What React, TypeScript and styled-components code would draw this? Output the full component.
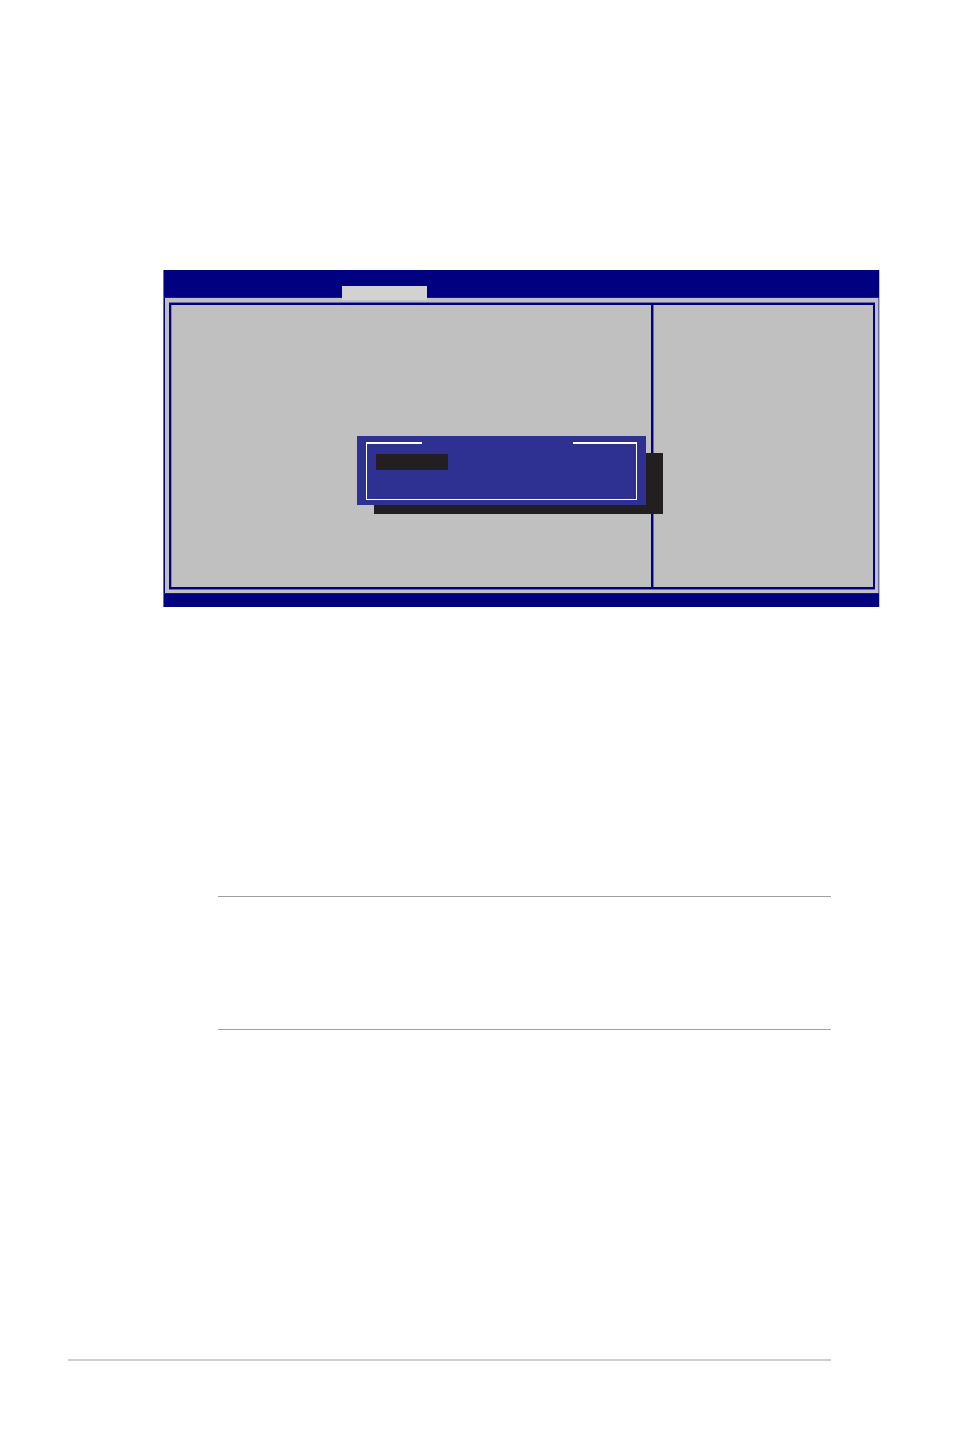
import React from "react";
import styled, { createGlobalStyle } from "styled-components";

const color = {
  navy: "#000080",
  navyEdge: "#6a68ae",
  panel: "#c0c0c0",
  tab: "#d2d2d2",
  popup: "#2e3192",
  black: "#231f20",
  rule: "#a0a0a0",
  footer: "#cfcfcf",
};

const GlobalStyle = createGlobalStyle`
  *, *::before, *::after { box-sizing: border-box; }
  body {
    margin: 0;
    background: #ffffff;
    font-family: "Liberation Sans", Arial, sans-serif;
  }
`;

const Page = styled.main`
  display: flex;
  flex-direction: column;
  min-height: 100vh;
  padding: 270px 123px 76px 68px;
`;

const Screen = styled.section`
  display: flex;
  flex-direction: column;
  margin: 0 -49px 0 95px;
  border-left: 1px solid ${color.navyEdge};
  border-right: 1px solid #bdbbdd;
`;

const MenuBar = styled.header`
  display: flex;
  align-items: flex-end;
  height: 28px;
  padding-left: 178px;
  background: ${color.navy};
  border-bottom: 1px solid #1a1887;
`;

const ActiveTab = styled.div`
  position: relative;
  width: 85px;
  height: 14px;
  margin-bottom: -3px;
  background: ${color.tab};
`;

const Body = styled.div`
  padding: 4px 3px 3px 4px;
  background: ${color.panel};
  border-left: 1px solid ${color.navy};
  border-right: 1px solid ${color.navyEdge};
`;

const FrameEdge = styled.div`
  border-top: 1px solid ${color.navyEdge};
  border-bottom: 1px solid ${color.navyEdge};
`;

const Frame = styled.div`
  position: relative;
  display: flex;
  height: 286px;
  border: 2px solid ${color.navy};
`;

const Settings = styled.div`
  flex: 479 1 0;
  border-left: 1px solid #8887b0;
`;

const Help = styled.aside`
  flex: 220 1 0;
  border-left: 2px solid ${color.navy};
  box-shadow: inset 1px 0 0 ${color.navyEdge};
`;

const StatusBar = styled.footer`
  height: 14px;
  background: ${color.navy};
  border-top: 1px solid #1a1887;
`;

const Popup = styled.div`
  position: absolute;
  top: 131px;
  left: 186px;
  width: 289px;
  height: 69px;
  padding: 6px 9px 5px;
  background: ${color.popup};
`;

const PopupShadow = styled.div`
  position: absolute;
  top: 148px;
  left: 203px;
  width: 289px;
  height: 61px;
  background: ${color.black};
`;

const PopupTitle = styled.div`
  display: flex;
  justify-content: space-between;
  height: 2px;
`;

const TitleRule = styled.span<{ $width: number }>`
  width: ${({ $width }) => $width}px;
  background: #ffffff;
`;

const PopupList = styled.div`
  height: 56px;
  padding: 10px 9px;
  border: 1px solid #ffffff;
  border-top: 0;
`;

const SelectedOption = styled.div`
  width: 72px;
  height: 16px;
  background: ${color.black};
`;

const Note = styled.section`
  height: 134px;
  margin: 289px 0 0 150px;
  border-top: 1px solid ${color.rule};
  border-bottom: 1px solid ${color.rule};
`;

const FooterRule = styled.hr`
  width: 100%;
  height: 2px;
  margin: auto 0 0;
  border: 0;
  background: ${color.footer};
`;

export default function App() {
  return (
    <>
      <GlobalStyle />
      <Page>
        <Screen>
          <MenuBar>
            <ActiveTab />
          </MenuBar>
          <Body>
            <FrameEdge>
              <Frame>
                <Settings />
                <Help />
                <PopupShadow />
                <Popup>
                  <PopupTitle>
                    <TitleRule $width={56} />
                    <TitleRule $width={64} />
                  </PopupTitle>
                  <PopupList>
                    <SelectedOption />
                  </PopupList>
                </Popup>
              </Frame>
            </FrameEdge>
          </Body>
          <StatusBar />
        </Screen>
        <Note />
        <FooterRule />
      </Page>
    </>
  );
}
